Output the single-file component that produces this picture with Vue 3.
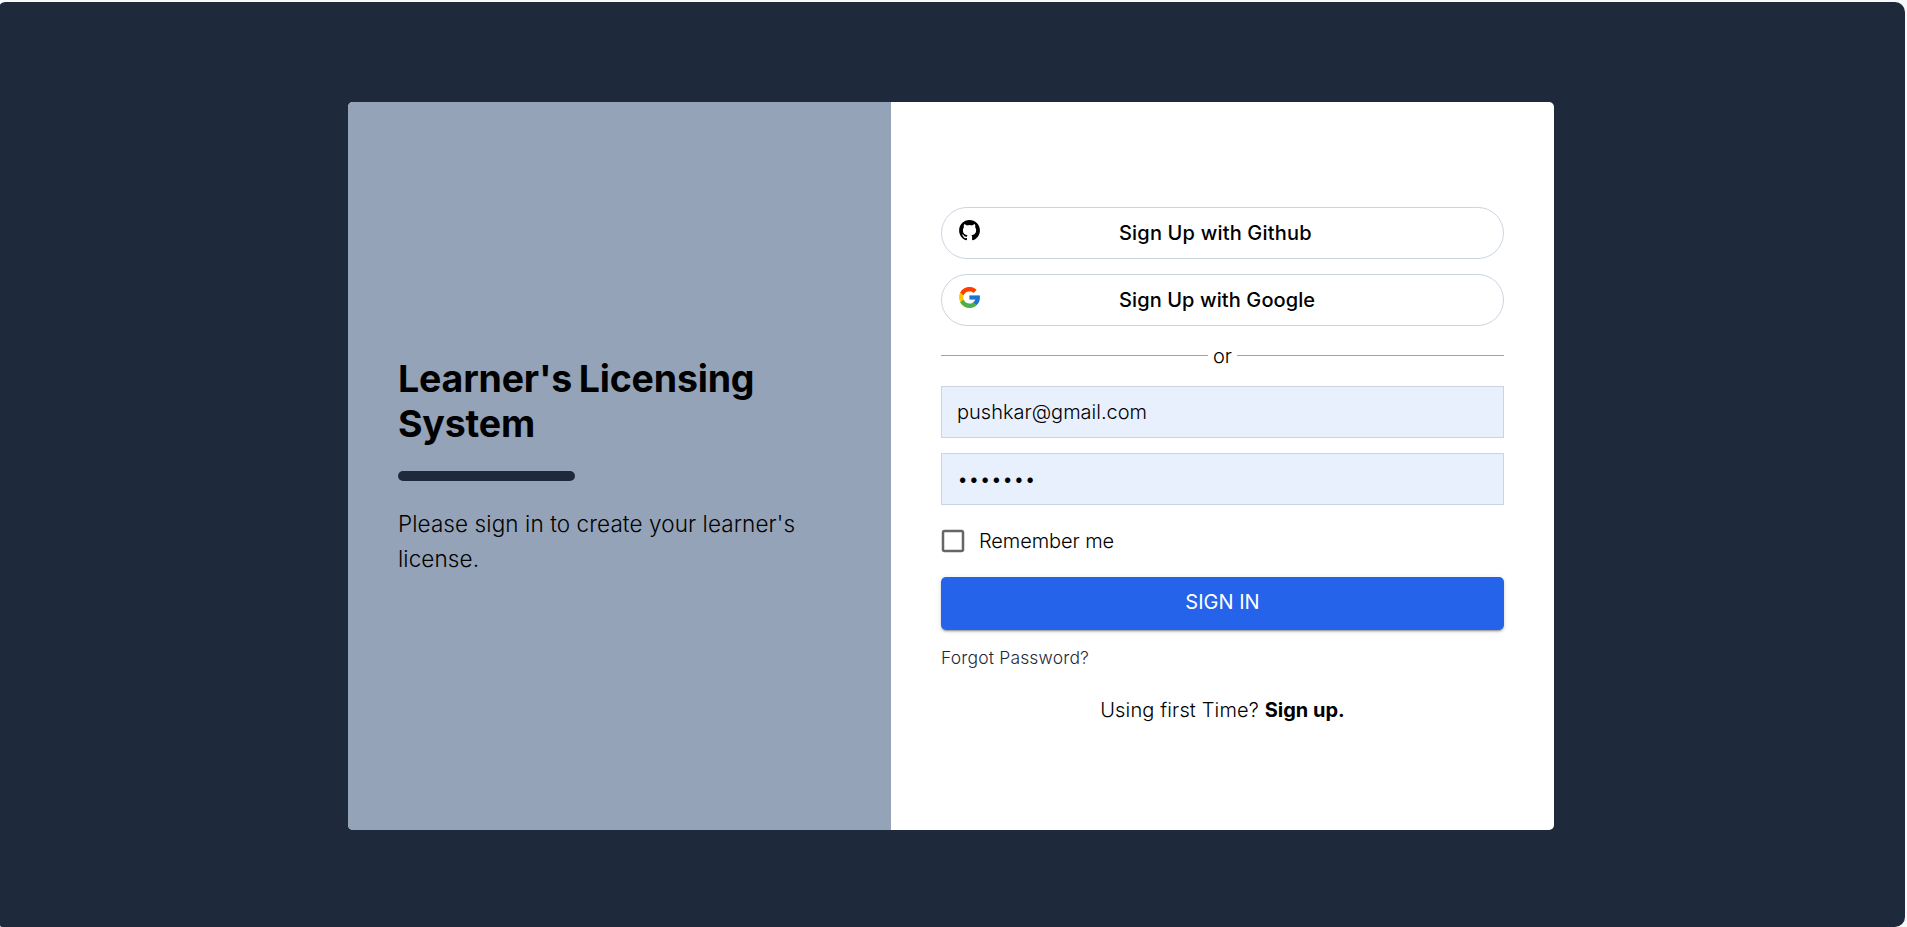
<script setup>
import { ref } from 'vue'

const email = ref('pushkar@gmail.com')
const password = ref('license')
const remember = ref(false)
</script>

<template>
  <div class="page">
    <main class="backdrop">
      <div class="card">
        <section class="intro">
          <h1>Learner's Licensing System</h1>
          <div class="bar"></div>
          <p>Please sign in to create your learner's license.</p>
        </section>

        <form class="form" @submit.prevent>
          <button type="button" class="social github">
            <svg viewBox="0 0 24 24"><path d="M12.026 2c-5.509 0-9.974 4.465-9.974 9.974 0 4.406 2.857 8.145 6.821 9.465.499.09.679-.217.679-.481 0-.237-.008-.865-.011-1.696-2.775.602-3.361-1.338-3.361-1.338-.452-1.152-1.107-1.459-1.107-1.459-.905-.619.069-.605.069-.605 1.002.07 1.527 1.028 1.527 1.028.89 1.524 2.336 1.084 2.902.829.091-.645.351-1.085.635-1.334-2.214-.251-4.542-1.107-4.542-4.93 0-1.087.389-1.979 1.024-2.675-.101-.253-.446-1.268.099-2.64 0 0 .837-.269 2.742 1.021a9.582 9.582 0 0 1 2.496-.336 9.554 9.554 0 0 1 2.496.336c1.906-1.291 2.742-1.021 2.742-1.021.545 1.372.203 2.387.099 2.64.64.696 1.024 1.587 1.024 2.675 0 3.833-2.33 4.675-4.552 4.922.355.308.675.916.675 1.846 0 1.334-.012 2.41-.012 2.737 0 .267.178.577.687.479C19.146 20.115 22 16.379 22 11.974 22 6.465 17.535 2 12.026 2z" /></svg>
            <span>Sign Up with Github</span>
          </button>
          <button type="button" class="social">
            <svg viewBox="0 0 48 48">
              <path fill="#FFC107" d="M43.611 20.083H42V20H24v8h11.303c-1.649 4.657-6.08 8-11.303 8-6.627 0-12-5.373-12-12s5.373-12 12-12c3.059 0 5.842 1.154 7.961 3.039l5.657-5.657C34.046 6.053 29.268 4 24 4 12.955 4 4 12.955 4 24s8.955 20 20 20 20-8.955 20-20c0-1.341-.138-2.65-.389-3.917z" />
              <path fill="#FF3D00" d="M6.306 14.691l6.571 4.819C14.655 15.108 18.961 12 24 12c3.059 0 5.842 1.154 7.961 3.039l5.657-5.657C34.046 6.053 29.268 4 24 4 16.318 4 9.656 8.337 6.306 14.691z" />
              <path fill="#4CAF50" d="M24 44c5.166 0 9.86-1.977 13.409-5.192l-6.19-5.238C29.211 35.091 26.715 36 24 36c-5.202 0-9.619-3.317-11.283-7.946l-6.522 5.025C9.505 39.556 16.227 44 24 44z" />
              <path fill="#1976D2" d="M43.611 20.083H42V20H24v8h11.303c-.792 2.237-2.231 4.166-4.087 5.571l6.193 5.238C36.971 39.205 44 34 44 24c0-1.341-.138-2.65-.389-3.917z" />
            </svg>
            <span>Sign Up with Google</span>
          </button>

          <div class="divider"><span>or</span></div>

          <input v-model="email" class="field" type="email" />
          <input v-model="password" class="field secret" type="password" />

          <label class="remember">
            <input v-model="remember" type="checkbox" />
            <svg viewBox="0 0 24 24"><path d="M19 5v14H5V5h14m0-2H5c-1.1 0-2 .9-2 2v14c0 1.1.9 2 2 2h14c1.1 0 2-.9 2-2V5c0-1.1-.9-2-2-2z" /></svg>
            <span>Remember me</span>
          </label>

          <button type="submit" class="submit">SIGN IN</button>
          <a class="forgot">Forgot Password?</a>
          <p class="signup">Using first Time? <b>Sign up.</b></p>
        </form>
      </div>
    </main>
  </div>
</template>

<style>
body {
  background: #f8f9fb;
  overflow: hidden;
}
</style>

<style scoped>
* {
  box-sizing: border-box;
}
.page {
  height: 927px;
  padding: 2px 2px 0 0;
  font-family: Inter, "Liberation Sans", sans-serif;
  font-size: 20px;
  line-height: 30px;
  font-weight: 300;
  color: #000;
}
.backdrop {
  height: 925px;
  padding: 100px 3px 0 0;
  border-radius: 6px 10px 10px 2px / 3px 10px 10px 2px;
  background: #1e293b;
}
.card {
  display: flex;
  width: 1206px;
  height: 728px;
  margin: 0 auto 0 348px;
  border-radius: 5px;
  overflow: hidden;
  background: #fff;
}
.intro {
  width: 543px;
  padding: 254px 50px 0;
  background: #94a3b8;
}
h1 {
  margin: 0;
  font-size: 37.5px;
  line-height: 45px;
  font-weight: 700;
  letter-spacing: -.18px;
  word-spacing: -2px;
}
.bar {
  width: 177px;
  height: 10px;
  margin: 25px 0;
  border-radius: 5px;
  background: #1e293b;
}
.intro p {
  margin: 0;
  font-size: 22.5px;
  line-height: 35px;
  letter-spacing: .09px;
}
.form {
  width: 663px;
  padding: 105px 50px 0;
}
.social {
  display: flex;
  width: 563px;
  height: 52px;
  margin: 0 0 15px;
  padding: 10px 15px;
  border: 1px solid #cbd5e1;
  border-radius: 26px;
  background: #fff;
  color: #000;
  font: 500 20px/30px Inter, "Liberation Sans", sans-serif;
  letter-spacing: .1px;
}
.github {
  letter-spacing: .18px;
}
.social svg {
  width: 25px;
  height: 25px;
  margin-right: 137px;
}
.divider {
  display: flex;
  align-items: center;
  gap: 5px;
  height: 30px;
  margin-bottom: 15px;
}
.divider::before,
.divider::after {
  content: "";
  flex: 1;
  height: 1px;
  margin-bottom: 1px;
  background: #94a3b8;
}
.field {
  display: block;
  width: 563px;
  height: 52px;
  margin: 0 0 15px;
  padding: 0 15px;
  border: 1px solid #cbd5e1;
  border-radius: 0;
  outline: none;
  background: #e8f0fe;
  color: #000;
  font: 300 20px/30px Inter, "Liberation Sans", sans-serif;
}
.remember {
  display: flex;
  align-items: center;
  height: 42px;
  margin: 0 0 15px -3px;
  letter-spacing: -.08px;
}
.remember input {
  display: none;
}
.remember svg {
  width: 30px;
  height: 30px;
  margin-right: 11px;
  fill: #666;
}
.submit {
  display: block;
  width: 563px;
  height: 53px;
  padding: 0 0 3px;
  border: 0;
  border-radius: 5px;
  background: #2563eb;
  box-shadow: 0 3px 1px -2px rgba(0, 0, 0, .2), 0 2px 2px rgba(0, 0, 0, .14), 0 1px 5px rgba(0, 0, 0, .12);
  color: #fff;
  font: 400 20px/30px Inter, "Liberation Sans", sans-serif;
}
.forgot {
  display: block;
  margin-top: 15px;
  font-size: 17.5px;
  line-height: 25px;
  letter-spacing: .17px;
  color: #1e293b;
}
.signup {
  margin: 25px 0 0;
  text-align: center;
  letter-spacing: .14px;
}
.signup b {
  font-weight: 700;
  letter-spacing: 0;
}
</style>
